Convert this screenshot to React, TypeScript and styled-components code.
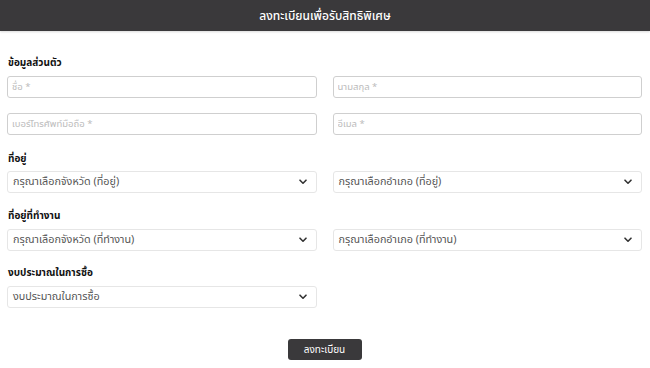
import React from "react";
import styled, { createGlobalStyle } from "styled-components";

const Global = createGlobalStyle`
  html, body { margin: 0; padding: 0; background: #fff; }
  body { font-family: "Noto Sans Thai", "Noto Sans", "Liberation Sans", sans-serif; }
  * { box-sizing: border-box; }
`;

const Header = styled.header`
  height: 31px;
  background: #3a393b;
  color: #fff;
  display: flex;
  align-items: center;
  justify-content: center;
  font-size: 12px;
  font-weight: 500;
  box-shadow: 0 1px 2px rgba(0, 0, 0, 0.15);
`;

const Form = styled.form`
  display: flex;
  flex-direction: column;
  padding: 25px 8px 0 7px;
`;

const Section = styled.section<{ $gap: number }>`
  display: flex;
  flex-direction: column;
  margin-bottom: ${(p) => p.$gap}px;
`;

const Label = styled.div<{ $mb: number }>`
  font-size: 10px;
  line-height: 14px;
  font-weight: 700;
  color: #111;
  padding-left: 1px;
  margin-bottom: ${(p) => p.$mb}px;
`;

const Grid = styled.div`
  display: grid;
  grid-template-columns: 1fr 1fr;
  column-gap: 16px;
  row-gap: 15px;
`;

const Input = styled.input`
  height: 22px;
  width: 100%;
  border: 1px solid #cfcfcf;
  border-radius: 3px;
  padding: 0 4px;
  font-family: inherit;
  font-size: 9.5px;
  color: #333;
  outline: none;
  &::placeholder { color: #bbbbbb; }
`;

const SelectBox = styled.div`
  position: relative;
  height: 22px;
  border: 1px solid #e6e6e6;
  border-radius: 3px;
  display: flex;
  align-items: center;
  justify-content: space-between;
  padding: 0 9px 0 5px;
  font-size: 10.8px;
  color: #555;
  background: #fff;
`;

const Chevron = styled.svg`
  width: 8px;
  height: 6px;
`;

const ButtonRow = styled.div`
  display: flex;
  justify-content: center;
  margin-top: 31px;
`;

const Button = styled.button`
  width: 74px;
  height: 21px;
  background: #3a393b;
  color: #fff;
  border: none;
  border-radius: 3px;
  font-family: inherit;
  font-size: 10px;
  padding: 0;
`;

const Select = ({ text }: { text: string }) => (
  <SelectBox>
    <span>{text}</span>
    <Chevron viewBox="0 0 8 6">
      <path d="M1 1.2 L4 4.2 L7 1.2" fill="none" stroke="#333" strokeWidth="1.6" strokeLinecap="round" strokeLinejoin="round" />
    </Chevron>
  </SelectBox>
);

export default function App() {
  return (
    <>
      <Global />
      <Header>ลงทะเบียนเพื่อรับสิทธิพิเศษ</Header>
      <Form onSubmit={(e) => e.preventDefault()}>
        <Section $gap={17}>
          <Label $mb={6}>ข้อมูลส่วนตัว</Label>
          <Grid>
            <Input placeholder="ชื่อ *" />
            <Input placeholder="นามสกุล *" />
            <Input placeholder="เบอร์โทรศัพท์มือถือ *" />
            <Input placeholder="อีเมล *" />
          </Grid>
        </Section>
        <Section $gap={16}>
          <Label $mb={5}>ที่อยู่</Label>
          <Grid>
            <Select text="กรุณาเลือกจังหวัด (ที่อยู่)" />
            <Select text="กรุณาเลือกอำเภอ (ที่อยู่)" />
          </Grid>
        </Section>
        <Section $gap={15}>
          <Label $mb={6}>ที่อยู่ที่ทำงาน</Label>
          <Grid>
            <Select text="กรุณาเลือกจังหวัด (ที่ทำงาน)" />
            <Select text="กรุณาเลือกอำเภอ (ที่ทำงาน)" />
          </Grid>
        </Section>
        <Section $gap={0}>
          <Label $mb={6}>งบประมาณในการซื้อ</Label>
          <Grid>
            <Select text="งบประมาณในการซื้อ" />
          </Grid>
        </Section>
        <ButtonRow>
          <Button type="submit">ลงทะเบียน</Button>
        </ButtonRow>
      </Form>
    </>
  );
}
